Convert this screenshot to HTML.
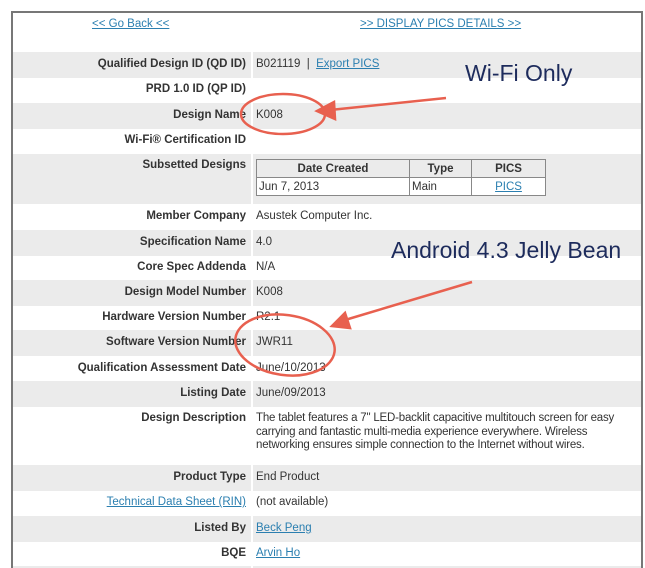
<!DOCTYPE html>
<html><head><meta charset="utf-8"><style>
html,body{margin:0;width:645px;height:568px;overflow:hidden}
body{background:#fff;font-family:"Liberation Sans",Arial,sans-serif;font-size:11.5px;color:#333;position:relative}
.box{position:absolute;left:11px;top:11px;width:628px;height:557px;border:2px solid #777;border-bottom:none;background:#fff;overflow:hidden}
a{color:#2b7fb0;text-decoration:underline}
.row{position:absolute;left:0;width:628px;height:25.5px}
.g{background:#ebebeb}
.lab{position:absolute;right:395px;font-weight:bold;text-align:right;white-space:nowrap}
.val{position:absolute;left:243px;white-space:nowrap}
.div{position:absolute;left:238px;top:39px;width:2px;height:540px;background:#fff}
.ann{position:absolute;font-size:23px;color:#1d2b5c;white-space:nowrap}
table{border-collapse:collapse;font-size:11.5px}
td{border:1px solid #888;padding:1px 2px;height:15px}
</style></head><body>
<div class="box">
<a style="position:absolute;left:79px;top:5px">&lt;&lt; Go Back &lt;&lt;</a>
<a style="position:absolute;left:347px;top:5px">&gt;&gt; DISPLAY PICS DETAILS &gt;&gt;</a>

<div class="row g" style="top:39px"><span class="lab" style="top:6px">Qualified Design ID (QD ID)</span><span class="val" style="top:6px">B021119 &nbsp;| &nbsp;<a>Export PICS</a></span></div>
<div class="row" style="top:64px"><span class="lab" style="top:6px">PRD 1.0 ID (QP ID)</span></div>
<div class="row g" style="top:90px"><span class="lab" style="top:6px">Design Name</span><span class="val" style="top:6px">K008</span></div>
<div class="row" style="top:115px"><span class="lab" style="top:6px">Wi-Fi® Certification ID</span></div>
<div class="row g" style="top:141px;height:50px"><span class="lab" style="top:5px">Subsetted Designs</span>
<table style="position:absolute;left:243px;top:5px;width:290px;background:#fff">
<tr style="background:#ebebeb;font-weight:bold;text-align:center"><td style="width:148px">Date Created</td><td style="width:57px">Type</td><td>PICS</td></tr>
<tr><td>Jun 7, 2013</td><td>Main</td><td style="text-align:center"><a>PICS</a></td></tr></table></div>
<div class="row" style="top:191px"><span class="lab" style="top:6px">Member Company</span><span class="val" style="top:6px">Asustek Computer Inc.</span></div>
<div class="row g" style="top:217px"><span class="lab" style="top:6px">Specification Name</span><span class="val" style="top:6px">4.0</span></div>
<div class="row" style="top:242px"><span class="lab" style="top:6px">Core Spec Addenda</span><span class="val" style="top:6px">N/A</span></div>
<div class="row g" style="top:267px"><span class="lab" style="top:6px">Design Model Number</span><span class="val" style="top:6px">K008</span></div>
<div class="row" style="top:292px"><span class="lab" style="top:6px">Hardware Version Number</span><span class="val" style="top:6px">R2.1</span></div>
<div class="row g" style="top:317px"><span class="lab" style="top:6px">Software Version Number</span><span class="val" style="top:6px">JWR11</span></div>
<div class="row" style="top:343px"><span class="lab" style="top:6px">Qualification Assessment Date</span><span class="val" style="top:6px">June/10/2013</span></div>
<div class="row g" style="top:368px"><span class="lab" style="top:6px">Listing Date</span><span class="val" style="top:6px">June/09/2013</span></div>
<div class="row" style="top:393px;height:59px"><span class="lab" style="top:6px">Design Description</span><span class="val" style="top:6px;white-space:normal;width:380px;line-height:13.5px;letter-spacing:-0.2px">The tablet features a 7" LED-backlit capacitive multitouch screen for easy carrying and fantastic multi-media experience everywhere. Wireless networking ensures simple connection to the Internet without wires.</span></div>
<div class="row g" style="top:452px"><span class="lab" style="top:6px">Product Type</span><span class="val" style="top:6px">End Product</span></div>
<div class="row" style="top:477px"><span class="lab" style="top:6px;font-weight:normal"><a>Technical Data Sheet (RIN)</a></span><span class="val" style="top:6px">(not available)</span></div>
<div class="row g" style="top:503px"><span class="lab" style="top:6px">Listed By</span><span class="val" style="top:6px"><a>Beck Peng</a></span></div>
<div class="row" style="top:528px"><span class="lab" style="top:6px">BQE</span><span class="val" style="top:6px"><a>Arvin Ho</a></span></div>
<div class="row g" style="top:553px"></div>
<div class="div"></div>
</div>
<div class="ann" style="left:465px;top:60px">Wi-Fi Only</div>
<div class="ann" style="left:391px;top:237px">Android 4.3 Jelly Bean</div>
<svg width="645" height="568" style="position:absolute;left:0;top:0" fill="none" stroke="#e8604f" stroke-width="2.5">
<ellipse cx="283" cy="114" rx="42" ry="20"/>
<ellipse cx="285" cy="345" rx="50" ry="30" transform="rotate(8 285 345)"/>
<line x1="446" y1="98" x2="330" y2="110"/>
<polygon points="317,111 334,102 335,119" fill="#e8604f"/>
<line x1="472" y1="282" x2="345" y2="320"/>
<polygon points="332,326 345,313 350,328" fill="#e8604f"/>
</svg>
</body></html>
